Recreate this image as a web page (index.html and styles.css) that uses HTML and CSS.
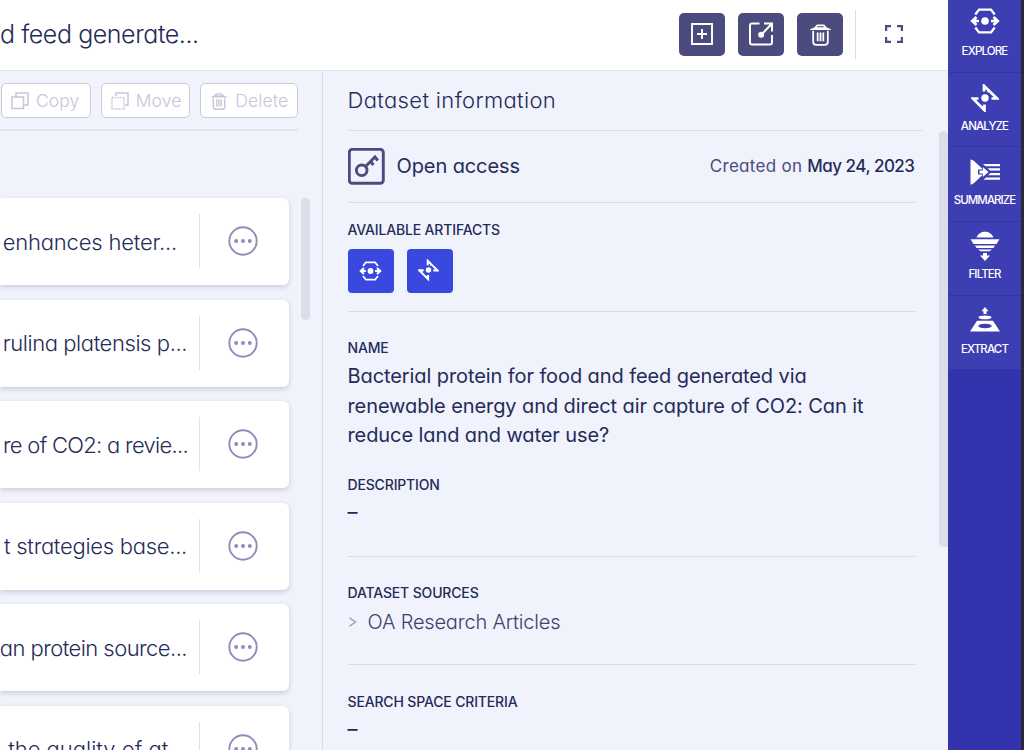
FILE: index.html
```html
<!DOCTYPE html>
<html lang="en">
<head>
<meta charset="utf-8">
<title>Dataset</title>
<link rel="stylesheet" href="styles.css">
</head>
<body>
<svg class="defs" width="0" height="0" aria-hidden="true">
  <symbol id="explore" viewBox="0 0 30 26">
    <path d="M5.300 6.500 9 1.600h12l3.700 4.900M5.300 19.500 9 24.400h12l3.700-4.900" fill="none" stroke="currentColor" stroke-width="2.300"/>
    <path d="M6.500 9 2.300 13l4.200 4M23.500 9l4.200 4-4.200 4M2.500 13H9M21 13h6.500" fill="none" stroke="currentColor" stroke-width="2.700"/>
    <circle cx="15" cy="13" r="3.800" fill="currentColor"/>
  </symbol>
  <symbol id="analyze" viewBox="0 0 28 28">
    <path d="M13 7.500V1.800L26 14.500H20.500M13.500 20.500v5.700L1.800 14.500H7.500" fill="none" stroke="currentColor" stroke-width="2.700"/>
    <path d="M13.500 2.500 17 6v2.500M13.500 25.500 10.500 22" fill="none" stroke="currentColor" stroke-width="1.200"/>
    <circle cx="14" cy="14" r="3.700" fill="currentColor"/>
  </symbol>
  <symbol id="trash" viewBox="0 0 22 22">
    <path d="M1 6 5 4.200 7.500 1.400h7L17 4.200 21 6v.8H1z" fill="currentColor"/>
    <path d="M8 3.600h6" stroke="var(--cut)" stroke-width="1"/>
    <path d="M4 7.500V18q0 3 3 3h8q3 0 3-3V7.500M8.300 9v8.500M11 9v8.500M13.700 9v8.500" fill="none" stroke="currentColor" stroke-width="1.700"/>
  </symbol>
  <symbol id="more" viewBox="0 0 30 30">
    <circle cx="15" cy="15" r="13.700" fill="none" stroke="currentColor" stroke-width="1.900"/>
    <g fill="currentColor"><circle cx="8.200" cy="15" r="2"/><circle cx="15" cy="15" r="2"/><circle cx="21.800" cy="15" r="2"/></g>
  </symbol>
</svg>
<div class="app">
  <div class="workspace">
    <header class="topbar">
      <h1 class="title">d feed generate...</h1>
      <div class="actions">
        <button class="action"><svg width="24" height="24" viewBox="0 0 24 24" fill="none" stroke="currentColor" stroke-width="1.900"><path d="M2 2h20v20H2zM12 7v10M7 12h10"/></svg></button>
        <button class="action"><svg width="26" height="26" viewBox="0 0 26 26" fill="none" stroke="currentColor" stroke-width="2"><path d="M11.500 2.500H4q-2 0-2 2v17q0 2 2 2h18q2 0 2-2V14M16 2.500h8v8M24 2.500 14 13"/><circle cx="13.200" cy="13.700" r="2" fill="currentColor"/></svg></button>
        <button class="action action-trash"><svg width="23" height="23"><use href="#trash"/></svg></button>
        <span class="rule"></span>
        <svg class="expand" width="18" height="18" viewBox="0 0 18 18" fill="none" stroke="currentColor" stroke-width="2.200"><path d="M1.100 6V1.100H6M12 1.100h4.900V6M16.900 12v4.900H12M6 16.900H1.100V12"/></svg>
      </div>
    </header>
    <main class="panes">
      <section class="list-pane">
        <div class="tools">
          <button class="tool"><svg width="18" height="18" viewBox="0 0 18 18" fill="none" stroke="currentColor" stroke-width="1.500"><path d="M1 5h11.500v11.500H1zM5 4.500V1h12v12h-3.500"/></svg><span>Copy</span></button>
          <button class="tool"><svg width="18" height="18" viewBox="0 0 18 18" fill="none" stroke="currentColor" stroke-width="1.500"><path d="M1 5.500h12v11.500H1z" stroke-dasharray="1.500 1"/><path d="M5 4V1h12v12h-3"/></svg><span>Move</span></button>
          <button class="tool tool-delete"><svg width="18" height="18"><use href="#trash"/></svg><span>Delete</span></button>
        </div>
        <ul class="cards">
          <li class="card"><span class="name">enhances heter...</span><span class="menu"><svg width="30" height="30"><use href="#more"/></svg></span></li>
          <li class="card"><span class="name">rulina platensis p...</span><span class="menu"><svg width="30" height="30"><use href="#more"/></svg></span></li>
          <li class="card"><span class="name">re of CO2: a revie...</span><span class="menu"><svg width="30" height="30"><use href="#more"/></svg></span></li>
          <li class="card"><span class="name">t strategies base...</span><span class="menu"><svg width="30" height="30"><use href="#more"/></svg></span></li>
          <li class="card"><span class="name">an protein source...</span><span class="menu"><svg width="30" height="30"><use href="#more"/></svg></span></li>
          <li class="card"><span class="name">the quality of at...</span><span class="menu"><svg width="30" height="30"><use href="#more"/></svg></span></li>
        </ul>
        <span class="thumb list-thumb"></span>
      </section>
      <section class="info">
        <h2 class="info-title">Dataset information</h2>
        <div class="block access">
          <svg width="37" height="37" viewBox="0 0 37 37" fill="none" stroke="currentColor" stroke-width="2.900"><rect x="1.300" y="1.300" width="34" height="34" rx="3"/><circle cx="13.700" cy="22.300" r="5.300"/><path d="M17.500 18.500 27 9l2.800 3.500M22.500 13.500l3 3.500"/></svg>
          <span class="open">Open access</span>
          <span class="created">Created on <b>May 24, 2023</b></span>
        </div>
        <div class="block artifacts">
          <h3 class="label">AVAILABLE ARTIFACTS</h3>
          <div class="chips">
            <span class="chip"><svg width="23" height="20"><use href="#explore"/></svg></span>
            <span class="chip chip-analyze"><svg width="21" height="22"><use href="#analyze"/></svg></span>
          </div>
        </div>
        <div class="block about">
          <h3 class="label">NAME</h3>
          <p class="text">Bacterial protein for food and feed generated via<br>renewable energy and direct air capture of CO2: Can it<br>reduce land and water use?</p>
          <h3 class="label description">DESCRIPTION</h3>
          <p class="text">–</p>
        </div>
        <div class="block sources">
          <h3 class="label">DATASET SOURCES</h3>
          <p class="source"><svg width="10" height="12" viewBox="0 0 10 12" fill="none" stroke="currentColor" stroke-width="1.500"><path d="m1.500 1.800 6 4.200-6 4.200"/></svg><span>OA Research Articles</span></p>
        </div>
        <div class="criteria">
          <h3 class="label">SEARCH SPACE CRITERIA</h3>
          <p class="text">–</p>
        </div>
        <span class="thumb info-thumb"></span>
      </section>
    </main>
  </div>
  <nav class="rail">
    <a class="link first"><svg width="30" height="26"><use href="#explore"/></svg><span>EXPLORE</span></a>
    <a class="link"><svg width="28" height="28"><use href="#analyze"/></svg><span>ANALYZE</span></a>
    <a class="link"><svg width="30" height="28" viewBox="0 0 30 28" fill="currentColor"><path d="M.5 1.500q2 0 3.500 1.500l8 7.500v1H8v5h4v1l-8 7.500Q2.500 26.500.5 26.500z"/><path d="m12.800 9 5.700 5-5.700 5v-3.500H9.500v-3h3.300zM13 6h17v2.300H15.500zM17.500 10.300H30v2.300H20zM20.500 15H30v2.300H18zM16 19.500h14v2.300H13.500z"/></svg><span class="wide">SUMMARIZE</span></a>
    <a class="link link-filter"><svg width="30" height="31" viewBox="0 0 30 31" fill="currentColor"><path d="M6.500 6.500C9.500-1.300 20.500-1.300 23.500 6.500zM.5 8.300h29L26.500 13h-23zM5 14.500h20L23.500 17h-17zM8 18.500h14l-2.500 1.700h-9zM13 22h4v2.500h3l-5 5.500-5-5.500h3z"/></svg><span>FILTER</span></a>
    <a class="link link-extract"><svg width="30" height="25" viewBox="0 0 30 25" fill="currentColor"><path d="m15 0 3.500 4.300h-2V7h-3V4.300h-2z"/><ellipse cx="15" cy="10.400" rx="6.500" ry="1.900"/><path fill-rule="evenodd" d="M7 13.800h16l7 10.700H0zM15 16.800c-9 0-9 4.500 0 4.500s9-4.500 0-4.500z"/></svg><span>EXTRACT</span></a>
  </nav>
</div>
</body>
</html>
```
FILE: styles.css
```css
* { box-sizing: border-box; }
body {
  margin: 0;
  overflow: hidden;
  font-family: Inter, "Open Sans", sans-serif;
  font-feature-settings: "cv11";
  color: #252b58;
}
h1, h2, h3, p, ul { margin: 0; padding: 0; font-weight: 400; }
button { font: inherit; font-feature-settings: inherit; margin: 0; padding: 0; }
svg { display: block; flex: none; }
.defs { position: absolute; }
.app { display: flex; width: 1024px; height: 750px; }
.workspace { width: 948px; display: flex; flex-direction: column; background: #f0f3fc; }

.topbar {
  height: 71px;
  flex: none;
  display: flex;
  justify-content: space-between;
  background: #fff;
  border-bottom: 1px solid #e3e4ee;
}
.title { font-size: 25px; line-height: 68px; font-weight: 360; letter-spacing: -0.430px; white-space: nowrap; }
.actions { display: flex; padding: 10px 45px 0 0; color: #4b4b7e; }
.action {
  width: 46px;
  height: 43px;
  margin: 3px 13px 0 0;
  border: 0;
  border-radius: 5px;
  background: #4b4b7e;
  color: #fff;
  display: flex;
  align-items: center;
  justify-content: center;
}
.action svg { margin-top: -1px; }
.action-trash { --cut: #4b4b7e; margin-right: 12px; }
.rule { width: 1px; height: 49px; background: #dcdce8; }
.expand { margin: 15px 0 0 29px; }

.panes { flex: 1; display: flex; min-height: 0; }
.list-pane { position: relative; width: 323px; flex: none; border-right: 1px solid #d9daea; overflow: hidden; }
.tools {
  display: flex;
  gap: 10px;
  width: 298px;
  height: 60px;
  padding: 12px 0 0 1px;
  border-bottom: 2px solid #e2e4f2;
}
.tool {
  width: 90px;
  height: 35px;
  padding-left: 9px;
  display: flex;
  align-items: center;
  gap: 7px;
  border: 1px solid #cbcada;
  border-radius: 5px;
  background: #fff;
  color: #c7c5da;
  font-size: 17.500px;
  font-weight: 320;
  letter-spacing: 0.1px;
  white-space: nowrap;
}
.tool span { margin-top: -1px; }
.tool-delete { --cut: #fff; width: 98px; }
.cards { list-style: none; display: flex; flex-direction: column; gap: 14.500px; padding-top: 67px; }
.card {
  width: 289px;
  height: 87px;
  flex: none;
  display: flex;
  align-items: center;
  background: #fff;
  border-radius: 0 6px 6px 0;
  box-shadow: 0 2px 5px rgba(50, 50, 80, .2);
}
.name { width: 199px; padding: 0 12px 0 0; display: flex; justify-content: flex-end; white-space: nowrap; font-size: 22px; font-weight: 360; letter-spacing: -0.280px; }
.card:nth-child(1) .name { padding-right: 22px; letter-spacing: -0.180px; }
.card:nth-child(2) .name { padding-right: 12px; letter-spacing: -0.420px; }
.card:nth-child(3) .name { padding-right: 11px; letter-spacing: -0.710px; }
.card:nth-child(5) .name { letter-spacing: -0.550px; }
.card:nth-child(6) .name { letter-spacing: 0; }
.menu { width: 90px; height: 54px; display: flex; align-items: center; padding-left: 28px; margin-top: -1px; border-left: 1px solid #e2e2e8; color: #8f8dbb; }
.thumb { position: absolute; width: 9px; background: #dddce8; border-radius: 5px; }
.list-thumb { left: 301px; top: 127px; height: 122px; }

.info { position: relative; flex: 1; padding-left: 24.500px; overflow: hidden; }
.info-title { width: 575px; height: 60px; line-height: 58px; font-size: 22px; font-weight: 360; letter-spacing: 0.350px; border-bottom: 1px solid #dddfed; }
.block { width: 567px; border-bottom: 1px solid #d8d9e7; }
.access { height: 72px; padding-bottom: 1px; display: flex; align-items: center; color: #4b4b7e; }
.open { margin-left: 12px; font-size: 20px; letter-spacing: -0.1px; color: #252b58; }
.created { margin-left: auto; font-size: 17px; font-weight: 370; letter-spacing: 0.280px; white-space: nowrap; }
.created b { font-weight: 550; letter-spacing: -0.5px; color: #252b58; }
.label { font-size: 14px; line-height: 20px; font-weight: 550; letter-spacing: -0.160px; }
.artifacts { height: 109px; padding-top: 17px; }
.chips { display: flex; gap: 13px; margin-top: 9px; }
.chip { width: 46px; height: 44px; border-radius: 4px; background: #3949e0; color: #fff; display: flex; align-items: center; justify-content: center; }
.chip-analyze svg { margin: 0 3px 3px 0; }
.about { height: 245px; padding-top: 26px; }
.text { margin-top: 4px; font-size: 20px; line-height: 29.500px; letter-spacing: -0.090px; white-space: nowrap; }
.description { margin-top: 24px; }
.description + .text { margin-top: 3px; }
.sources { height: 108px; padding-top: 26px; }
.source { display: flex; align-items: center; gap: 10px; height: 38px; color: #9f9dc8; font-size: 20px; }
.source span { color: #3d416d; font-weight: 360; letter-spacing: -0.180px; }
.criteria { padding-top: 27px; }
.criteria .text { margin-top: 3px; }
.info-thumb { right: 0; top: 60px; height: 416px; border-radius: 5px 5px 0 5px; }

.rail { width: 76px; background: #3333ad; border-right: 3px solid #292a35; }
.link {
  height: 74.400px;
  display: flex;
  flex-direction: column;
  align-items: center;
  justify-content: flex-end;
  gap: 6px;
  padding-bottom: 12.500px;
  background: #3d3eb1;
  color: #fff;
  border-bottom: 1px solid #3534a4;
  font-size: 11.500px;
  line-height: 16px;
  font-weight: 450;
  letter-spacing: -0.850px;
}
.first { height: 72.800px; gap: 9px; }
.link-filter { gap: 4px; }
.link-extract { gap: 9px; }
.wide { letter-spacing: -0.950px; }
```
